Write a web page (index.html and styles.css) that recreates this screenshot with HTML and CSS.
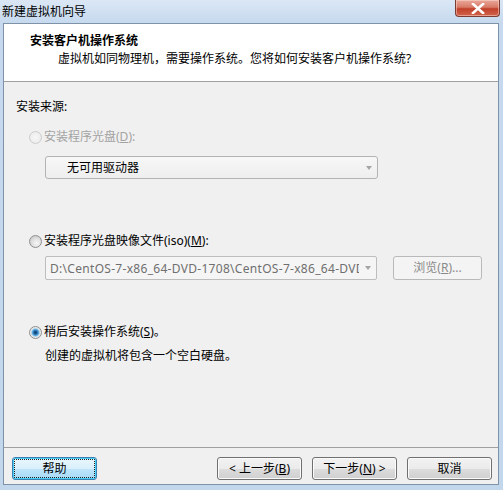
FILE: index.html
```html
<!DOCTYPE html>
<html lang="zh-CN">
<head>
<meta charset="utf-8">
<title>新建虚拟机向导</title>
<link rel="stylesheet" href="styles.css">
</head>
<body>
<div class="window">
  <div class="titlebar">
    <div class="title">新建虚拟机向导</div>
    <div class="close">
      <svg width="14" height="11" viewBox="0 0 14 11"><path d="M2 1 L12 10 M12 1 L2 10" stroke="#ffffff" stroke-width="2.6" stroke-linecap="square" fill="none"/></svg>
    </div>
  </div>
  <div class="client">
    <div class="header">
      <div class="h-title">安装客户机操作系统</div>
      <div class="h-sub">虚拟机如同物理机，需要操作系统。您将如何安装客户机操作系统?</div>
    </div>
    <div class="body">
      <div class="label">安装来源:</div>
      <div class="radio-row r1 disabled">
        <span class="radio"></span><span class="rlabel">安装程序光盘(<u>D</u>):</span>
      </div>
      <div class="combo combo1">
        <span class="ctext">无可用驱动器</span>
        <span class="carrow"><span class="tri"></span></span>
      </div>
      <div class="radio-row r2">
        <span class="radio"></span><span class="rlabel">安装程序光盘映像文件(iso)(<u>M</u>):</span>
      </div>
      <div class="iso-row">
        <div class="combo combo2">
          <span class="ctext">D:\CentOS-7-x86_64-DVD-1708\CentOS-7-x86_64-DVD-1708.iso</span>
          <span class="carrow"><span class="tri"></span></span>
        </div>
        <div class="btn-disabled">浏览(<u>R</u>)...</div>
      </div>
      <div class="radio-row r3">
        <span class="radio checked"></span><span class="rlabel">稍后安装操作系统(<u>S</u>)。</span>
      </div>
      <div class="note">创建的虚拟机将包含一个空白硬盘。</div>
    </div>
    <div class="footer">
      <div class="btn help">帮助</div>
      <div class="spacer"></div>
      <div class="btn">&lt; 上一步(<u>B</u>)</div>
      <div class="btn">下一步(<u>N</u>) &gt;</div>
      <div class="btn">取消</div>
    </div>
  </div>
</div>
</body>
</html>
```
FILE: styles.css
```css
* { box-sizing: border-box; }
html, body { margin: 0; padding: 0; }
body {
  width: 503px;
  height: 490px;
  overflow: hidden;
  font-family: "Noto Sans", "Noto Sans CJK SC", sans-serif;
  font-size: 12px;
  color: #000;
  background: linear-gradient(#dbe7f5 0, #c6d9ee 23px, #c2d6ec 100%);
}
.window {
  height: 490px;
  display: flex;
  flex-direction: column;
}
.titlebar {
  height: 23px;
  display: flex;
  justify-content: space-between;
  align-items: flex-start;
}
.title {
  padding-left: 2px;
  line-height: 23px;
  color: #000;
}
.close {
  width: 45px;
  height: 17px;
  margin-right: 3px;
  border: 1px solid #7a3b32;
  border-top: none;
  border-radius: 0 0 4px 4px;
  background: linear-gradient(#e9a99b 0, #d87a67 45%, #c1402a 55%, #d1644d 100%);
  box-shadow: inset 0 0 0 1px rgba(255, 220, 210, 0.5);
  display: flex;
  align-items: center;
  justify-content: center;
}
.close svg { display: block; }
.client {
  flex: 1;
  margin: 0 4px 5px 3px;
  border: 1px solid #7f93a8;
  background: #f0f0f0;
  display: flex;
  flex-direction: column;
}
.header {
  height: 58px;
  flex: none;
  background: #fff;
  border-bottom: 1px solid #a0a0a0;
  padding: 8px 0 0 26px;
}
.h-title {
  font-weight: bold;
  line-height: 18px;
}
.h-sub {
  line-height: 18px;
  margin-left: 28px;
}
.body {
  flex: 1;
  display: flex;
  flex-direction: column;
  padding: 16px 0 0 12px;
}
.label { line-height: 18px; }
.radio-row {
  display: flex;
  align-items: center;
  height: 18px;
  margin-left: 13px;
}
.r1 { margin-top: 12px; }
.r2 { margin-top: 53px; }
.r3 { margin-top: 43px; }
.radio {
  width: 13px;
  height: 13px;
  border-radius: 50%;
  border: 1px solid #8e8f8f;
  background: radial-gradient(circle at 60% 65%, #f6f6f6 0, #e1e1e1 45%, #d0d0d0 70%, #f2f2f2 100%);
  margin-right: 2px;
  flex: none;
}
.disabled .radio {
  border-color: #cdcdcd;
  background: radial-gradient(circle, #f7f7f7 0, #ececec 70%, #f6f6f6 100%);
}
.disabled .rlabel { color: #a3a3a3; }
.radio.checked {
  background: radial-gradient(circle at 50% 50%, #153f6b 0, #1d5a92 1.5px, #3d8ccc 2.5px, #7cc3ee 3.6px, #c9d8e4 4.2px, #e8e8e8 5px, #f4f4f4 100%);
}
.rlabel { line-height: 18px; white-space: nowrap; }
u { text-decoration: underline; text-underline-offset: 1px; }
.combo {
  display: flex;
  align-items: center;
  height: 23px;
  border: 1px solid #b3b3b3;
  border-radius: 3px;
}
.combo1 {
  margin-top: 10px;
  margin-left: 29px;
  width: 333px;
  background: linear-gradient(#f7f7f7, #eeeeee);
}
.combo1 .ctext { padding-left: 21px; color: #000; }
.ctext {
  flex: 1;
  overflow: hidden;
  white-space: nowrap;
  line-height: 21px;
}
.carrow {
  width: 17px;
  height: 21px;
  display: flex;
  align-items: center;
  justify-content: center;
  flex: none;
}
.tri {
  width: 0;
  height: 0;
  border-left: 3.5px solid transparent;
  border-right: 3.5px solid transparent;
  border-top: 4px solid #a5a5a5;
}
.iso-row {
  display: flex;
  margin-top: 6px;
  margin-left: 29px;
}
.combo2 {
  width: 332px;
  height: 24px;
  background: #f5f5f5;
  border-color: #bdbdbd;
  border-radius: 2px;
}
.combo2 .ctext { padding-left: 4px; color: #6f6f6f; letter-spacing: 0.3px; }
.btn-disabled {
  margin-left: 16px;
  width: 89px;
  height: 24px;
  border: 1px solid #b9b9b9;
  border-radius: 3px;
  background: #f4f4f4;
  color: #8a8a8a;
  text-align: center;
  line-height: 22px;
}
.note {
  margin-left: 29px;
  margin-top: 6px;
  line-height: 18px;
}
.footer {
  height: 37px;
  flex: none;
  border-top: 1px solid #a0a0a0;
  display: flex;
  align-items: flex-start;
  padding: 9px 6px 0 8px;
  gap: 10px;
}
.spacer { flex: 1; }
.btn {
  width: 85px;
  height: 23px;
  border: 1px solid #707070;
  border-radius: 3px;
  background: linear-gradient(#f2f2f2 0, #ebebeb 50%, #dddddd 50%, #cfcfcf 100%);
  box-shadow: inset 0 0 0 1px #fbfbfb;
  text-align: center;
  line-height: 21px;
  white-space: nowrap;
}
.btn.help {
  border-color: #3c7fb1;
  background: linear-gradient(#eaf6fd 0, #d9f0fc 50%, #bee6fd 50%, #a7d9f5 100%);
  box-shadow: inset 0 0 0 1px #48d0f8;
  outline: 1px dotted #202020;
  outline-offset: -3px;
}
```
